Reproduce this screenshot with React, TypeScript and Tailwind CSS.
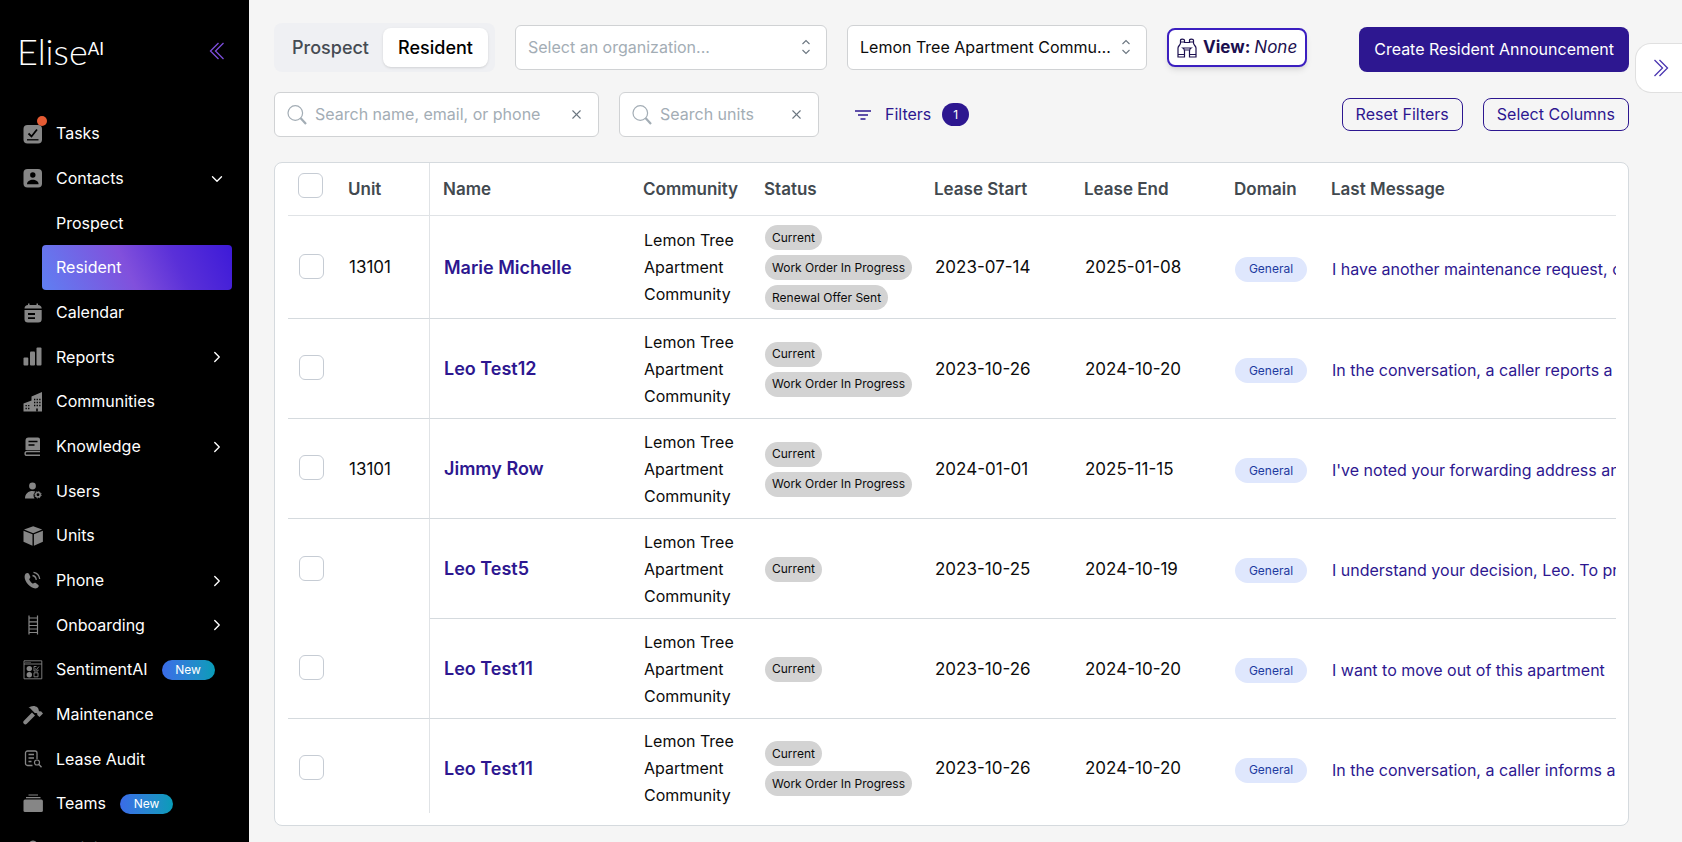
import React, { useState } from 'react';
import { ChevronDown, ChevronRight, X } from 'lucide-react';

type NavItem = {
  label: string;
  icon?: React.ReactNode;
  arrow?: 'down' | 'right';
  isNew?: boolean;
  dot?: boolean;
  sub?: boolean;
  active?: boolean;
};

const Glyph = ({ children }: { children: React.ReactNode }) => (
  <svg viewBox="0 0 20 20" className="h-5 w-5" fill="currentColor" aria-hidden="true">
    {children}
  </svg>
);

const NAV: NavItem[] = [
  {
    label: 'Tasks',
    dot: true,
    icon: (
      <Glyph>
        <rect x="0.5" y="1" width="18.5" height="18.5" rx="4" />
        <path d="M5.5 9.5l3 3 5.5-7" fill="none" stroke="#000" strokeWidth="1.8" />
        <path d="M4 15.8h11.5" stroke="#000" strokeWidth="1.3" />
      </Glyph>
    ),
  },
  {
    label: 'Contacts',
    arrow: 'down',
    icon: (
      <Glyph>
        <rect x="0.5" y="0" width="18.5" height="18.5" rx="4" />
        <circle cx="9.8" cy="6" r="2.7" fill="#000" />
        <path d="M4 15.3c0-6 11.6-6 11.6 0z" fill="#000" />
      </Glyph>
    ),
  },
  { label: 'Prospect', sub: true },
  { label: 'Resident', sub: true, active: true },
  {
    label: 'Calendar',
    icon: (
      <Glyph>
        <path d="M1.5 5.5C1.5 3.4 3 2 5 2V.5h1.5V2h7V.5H15V2c2 0 3.7 1.4 3.7 3.5z" />
        <path d="M1.5 7h17.2v9a3.5 3.5 0 0 1-3.5 3.5H5A3.5 3.5 0 0 1 1.5 16z" />
        <path d="M5 11h7M5 15.2h7" stroke="#000" strokeWidth="1.8" />
      </Glyph>
    ),
  },
  {
    label: 'Reports',
    arrow: 'right',
    icon: (
      <Glyph>
        <rect x="0.5" y="10.5" width="4.8" height="8" rx="1" />
        <rect x="7" y="4.5" width="5" height="14" rx="1" />
        <rect x="13.5" y="0.5" width="5" height="18" rx="1" />
      </Glyph>
    ),
  },
  {
    label: 'Communities',
    icon: (
      <Glyph>
        <path d="M0.5 11.5l8-3V4.5L19 0v19.5H0.5z" />
        <path
          d="M11 7.5h7M11 10.5h7M11 13.5h7M2.5 13.7h5M2.5 16.5h5"
          stroke="#000"
          strokeWidth="1.3"
          strokeDasharray="1.3 1.3"
        />
        <path d="M13.2 16.5h1.6v3h-1.6z" fill="#000" />
      </Glyph>
    ),
  },
  {
    label: 'Knowledge',
    arrow: 'right',
    icon: (
      <Glyph>
        <path d="M5.5 0.5H15a2 2 0 0 1 2 2V13H2.5V3.5a3 3 0 0 1 3-3z" />
        <path d="M5.5 4.5h9M5.5 8h6" stroke="#000" strokeWidth="1.3" />
        <path d="M17 14.5H4a1.7 1.7 0 0 0 0 3.8h13" fill="none" stroke="currentColor" strokeWidth="1.4" />
      </Glyph>
    ),
  },
  {
    label: 'Users',
    icon: (
      <Glyph>
        <circle cx="9.5" cy="5" r="3.4" />
        <path d="M2 17.5c0-5 3.5-7.5 7.5-7.5 1.2 0 2.2.2 3 .6-2.3 1.6-2.6 4.7-1 6.9z" />
        <circle cx="15" cy="13.8" r="2.2" fill="none" stroke="currentColor" strokeWidth="1.5" />
        <circle cx="15" cy="13.8" r="3.2" fill="none" stroke="currentColor" strokeWidth="1" strokeDasharray="1.3 1.2" />
      </Glyph>
    ),
  },
  {
    label: 'Units',
    icon: (
      <Glyph>
        <path d="M10.2 0.2l9 3.3-9 3.7L1 3.5z" />
        <path d="M0.5 4.7l9 3.6v11.5l-9-4zM19.9 4.7l-9 3.6v11.5l9-4z" />
      </Glyph>
    ),
  },
  {
    label: 'Phone',
    arrow: 'right',
    icon: (
      <Glyph>
        <path d="M2.5 2.8C4 1.5 5.5 1.8 6.2 3.2l1 2.2c.4 1-.1 1.7-.9 2.6-.5.6 2.8 5 3.9 4.5 1-.5 1.7-.9 2.6-.4l2.2 1.6c1.2.9.9 2.5-.8 3.4C8.5 19.8-1.5 8.5 2.5 2.8z" />
        <path d="M9.5 4.5c2 .4 3.5 2 3.8 4.3M10.5 1.3c3.5.6 5.8 3.2 6.2 6.7" fill="none" stroke="currentColor" strokeWidth="1.3" />
      </Glyph>
    ),
  },
  {
    label: 'Onboarding',
    arrow: 'right',
    icon: (
      <Glyph>
        <path
          d="M6 .5v19M14.5 .5v19M6 3h8.5M6 6.8h8.5M6 10.5h8.5M6 14h8.5M6 17.5h8.5"
          fill="none"
          stroke="currentColor"
          strokeWidth="1.2"
        />
      </Glyph>
    ),
  },
  {
    label: 'SentimentAI',
    isNew: true,
    icon: (
      <Glyph>
        <path d="M1 .8h17.8v18H1zM1 4h17.8" fill="none" stroke="currentColor" strokeWidth="0.9" />
        <path d="M2.5 2.4h5" stroke="currentColor" strokeDasharray="1 1" />
        <circle cx="6.3" cy="8.6" r="2.7" />
        <circle cx="6.3" cy="14.7" r="2.7" />
        <path d="M15 9.5v1.5h-4V6.5h2.5M12 8.5l1.3 1.2L16 6.5M11 12.8h4v4h-4z" fill="none" stroke="currentColor" strokeWidth="0.9" />
      </Glyph>
    ),
  },
  {
    label: 'Maintenance',
    icon: (
      <Glyph>
        <path d="M9 7.5l3 3-8.2 8.2a2 2 0 0 1-2.9-2.9z" />
        <path d="M5.5 3C8 .5 12 .2 14.5 2.5c1 1 1.3 2.3 1.3 3.3l1 .8 1.2-.3 2 2.2-3.5 3.5-2.2-2v-1.2l-.8-.8h-1.7L8.500 4.700C8 3.500 7 3 5.500 3z" />
      </Glyph>
    ),
  },
  {
    label: 'Lease Audit',
    icon: (
      <Glyph>
        <path
          d="M9.5 16.5H4.5a2 2 0 0 1-2-2V4a2 2 0 0 1 2-2H12a2 2 0 0 1 2 2v6M5.5 5.5H11M5.5 9H11M5.5 12.5h3"
          fill="none"
          stroke="currentColor"
          strokeWidth="1.3"
        />
        <circle cx="14" cy="13.5" r="2.5" fill="none" stroke="currentColor" strokeWidth="1.2" />
        <path d="M16 15.5l2.5 2.7" stroke="currentColor" strokeWidth="1.3" />
      </Glyph>
    ),
  },
  {
    label: 'Teams',
    isNew: true,
    icon: (
      <Glyph>
        <path d="M5.5 1h9.5M3 3.7h14.5" stroke="currentColor" strokeWidth="1.2" />
        <rect x="0.5" y="5.5" width="19.4" height="12.5" rx="1.5" />
      </Glyph>
    ),
  },
  {
    label: 'Training',
    icon: (
      <Glyph>
        <circle cx="10" cy="5.5" r="4" />
        <path d="M2 20c0-10 16-10 16 0z" />
      </Glyph>
    ),
  },
];

type Row = {
  unit?: string;
  name: string;
  status: string[];
  start: string;
  end: string;
  message: string;
  joined?: boolean; // shares its unit cell with the next row
};

const ROWS: Row[] = [
  {
    unit: '13101',
    name: 'Marie Michelle',
    status: ['Current', 'Work Order In Progress', 'Renewal Offer Sent'],
    start: '2023-07-14',
    end: '2025-01-08',
    message: 'I have another maintenance request, can you help?',
  },
  {
    name: 'Leo Test12',
    status: ['Current', 'Work Order In Progress'],
    start: '2023-10-26',
    end: '2024-10-20',
    message: 'In the conversation, a caller reports a maintenance issue',
  },
  {
    unit: '13101',
    name: 'Jimmy Row',
    status: ['Current', 'Work Order In Progress'],
    start: '2024-01-01',
    end: '2025-11-15',
    message: "I've noted your forwarding address and will update it",
  },
  {
    name: 'Leo Test5',
    status: ['Current'],
    start: '2023-10-25',
    end: '2024-10-19',
    message: 'I understand your decision, Leo. To proceed with this',
    joined: true,
  },
  {
    name: 'Leo Test11',
    status: ['Current'],
    start: '2023-10-26',
    end: '2024-10-20',
    message: 'I want to move out of this apartment',
  },
  {
    name: 'Leo Test11',
    status: ['Current', 'Work Order In Progress'],
    start: '2023-10-26',
    end: '2024-10-20',
    message: 'In the conversation, a caller informs a',
  },
];

const COLUMNS = ['Community', 'Status', 'Lease Start', 'Lease End', 'Domain', 'Last Message'];

function DoubleChevron({ dir }: { dir: 'left' | 'right' }) {
  return (
    <svg viewBox="0 0 16 18" className="h-[18px] w-4" fill="none" stroke="currentColor" strokeWidth="1.3" aria-hidden="true">
      {dir === 'left' ? <path d="M9.5 1l-8 8 8 8M14.5 1l-8 8 8 8" /> : <path d="M1.5 1l8 8-8 8M6.5 1l8 8-8 8" />}
    </svg>
  );
}

function Sidebar() {
  return (
    <aside className="flex h-screen w-[249px] shrink-0 flex-col overflow-hidden bg-black text-white">
      <div className="flex h-[111px] shrink-0 items-start justify-between pt-[29px] pr-6 pl-[17px]">
        <div className="flex items-start font-[Lato,sans-serif] font-light">
          <span className="text-[36px] leading-[44px]">Elise</span>
          <span className="text-[17px] leading-10 font-normal">AI</span>
        </div>
        <button aria-label="Collapse menu" className="mt-[13px] text-[#7c4ddb]">
          <DoubleChevron dir="left" />
        </button>
      </div>
      <nav>
        <ul>
          {NAV.map((item) => (
            <li key={item.label} className="h-[45px] nth-[3n]:h-11">
              {item.sub ? (
                <a
                  href="#"
                  className={
                    item.active
                      ? 'mr-[17px] ml-[42px] flex h-full items-center rounded-sm bg-[linear-gradient(65deg,#5f7ff2_0%,#8150dc_45%,#5a30d8_70%,#3d1ad8_100%)] pl-[14px]'
                      : 'mr-[17px] ml-[42px] flex h-full items-center pl-[14px]'
                  }
                >
                  {item.label}
                </a>
              ) : (
                <a href="#" className="flex h-full items-center pr-[23px] pl-[23px]">
                  <span className="relative mr-[13px] text-[#868686]">
                    {item.icon}
                    {item.dot && <span className="absolute -top-2 left-[14px] h-[10px] w-[10px] rounded-full bg-[#e55b33]" />}
                  </span>
                  {item.label}
                  {item.isNew && (
                    <span className="ml-[14px] flex h-5 w-[53px] items-center justify-center rounded-full bg-linear-to-r from-[#3a6be8] to-[#079cb8] text-xs">
                      New
                    </span>
                  )}
                  {item.arrow === 'down' && <ChevronDown size={18} strokeWidth={1.8} className="ml-auto" />}
                  {item.arrow === 'right' && <ChevronRight size={18} strokeWidth={1.8} className="ml-auto" />}
                </a>
              )}
            </li>
          ))}
        </ul>
      </nav>
    </aside>
  );
}

function UpDown() {
  return (
    <svg viewBox="0 0 10 16" className="pointer-events-none absolute top-[14px] right-4 h-4 w-2.5" fill="none" stroke="#6b7680" strokeWidth="1.1" aria-hidden="true">
      <path d="M1.500 5L5 1.500 8.500 5M1.500 11L5 14.500 8.500 11" />
    </svg>
  );
}

function SearchBox({ label, className }: { label: string; className: string }) {
  const [value, setValue] = useState('');
  return (
    <div className={`flex h-[45px] items-center rounded-md border border-[#d0d2d4] bg-white pr-[14px] pl-3 ${className}`}>
      <svg viewBox="0 0 20 20" className="mr-2 h-5 w-5 shrink-0" fill="none" stroke="#a3adb5" aria-hidden="true">
        <circle cx="8.3" cy="8" r="7.3" strokeWidth="1.2" />
        <path d="M13.5 13l5.5 6" strokeWidth="2.2" />
      </svg>
      <input
        aria-label={label}
        placeholder={label}
        value={value}
        onChange={(e) => setValue(e.target.value)}
        className="min-w-0 flex-1 outline-none placeholder:text-[#a3adb5]"
      />
      <button aria-label={`Clear ${label}`} onClick={() => setValue('')} className="text-[#6b7680]">
        <X size={15} strokeWidth={1.7} />
      </button>
    </div>
  );
}

function Check({ label }: { label: string }) {
  return (
    <input
      type="checkbox"
      aria-label={label}
      className="block h-[25px] w-[25px] appearance-none rounded-md border border-[#c6ccd4] bg-white checked:bg-[#2d1790]"
    />
  );
}

function Toolbar() {
  const [tab, setTab] = useState('Resident');
  return (
    <>
      <div className="flex items-center gap-5">
        <div className="flex h-[49px] shrink-0 items-center rounded-lg bg-[#eff0f3] pr-[7px] pl-1 font-medium">
          {['Prospect', 'Resident'].map((t) => (
            <button
              key={t}
              onClick={() => setTab(t)}
              className={
                tab === t
                  ? 'h-[39px] w-[105px] rounded-lg bg-white text-lg text-black shadow-sm'
                  : 'h-[39px] w-[105px] rounded-lg text-lg text-[#454b52]'
              }
            >
              {t}
            </button>
          ))}
        </div>
        <div className="relative w-[312px]">
          <select
            aria-label="Organization"
            className="h-[45px] w-full appearance-none rounded-md border border-[#d0d2d4] bg-white pr-7 pl-3 text-[#a3adb5]"
          >
            <option>Select an organization...</option>
          </select>
          <UpDown />
        </div>
        <div className="relative w-[300px]">
          <select
            aria-label="Community"
            className="h-[45px] w-full appearance-none rounded-md border border-[#d0d2d4] bg-white pr-7 pl-3 text-ellipsis"
          >
            <option>Lemon Tree Apartment Community</option>
          </select>
          <UpDown />
        </div>
        <button className="flex h-[39px] shrink-0 items-center rounded-lg border-2 border-[#3b1fc0] bg-white px-2 text-[17px] text-[#1c0f4f] shadow-md">
          <svg viewBox="0 0 20 20" className="mr-1.5 h-5 w-5" fill="none" stroke="currentColor" strokeWidth="1.2" aria-hidden="true">
            <path d="M1 16V10c0-2 2.5-3 2.5-5V2.2C3.5.7 7.5.7 7.5 2.2V4.5h5V2.2c0-1.5 4-1.5 4 0V5c0 2 2.5 3 2.5 5v6M3.5 4h4M12.5 4h4M1 16.5h6.5M12.5 16.5H19M1 16v3h6.5v-6c0-2-1.5-3-1.5-3h8s-1.5 1-1.5 3v6H19v-3M8 12h4" />
          </svg>
          <b className="mr-1 font-bold">View:</b>
          <i>None</i>
        </button>
        <button className="ml-auto h-[45px] shrink-0 self-end rounded-lg bg-[#2d1790] px-[15px] text-white">
          Create Resident Announcement
        </button>
      </div>

      <div className="mt-5 flex items-center gap-5">
        <SearchBox label="Search name, email, or phone" className="w-[325px]" />
        <SearchBox label="Search units" className="w-[200px]" />
        <button className="ml-4 flex items-center text-[#2d1790]">
          <svg viewBox="0 0 16 10" className="mr-[14px] h-2.5 w-4" stroke="currentColor" strokeWidth="1.3" aria-hidden="true">
            <path d="M0 1h16M3 5h10M5.5 9h5" />
          </svg>
          Filters
          <span className="ml-[11px] flex h-[23px] w-[27px] items-center justify-center rounded-full bg-[#2d1790] text-xs text-white">1</span>
        </button>
        <button className="ml-auto h-[33px] rounded-lg border border-[#2d1790] px-[13px] text-[#2d1790]">Reset Filters</button>
        <button className="h-[33px] rounded-lg border border-[#2d1790] px-[13px] text-[#2d1790]">Select Columns</button>
      </div>
    </>
  );
}

function ResidentRow({ row, last }: { row: Row; last: boolean }) {
  const line = last ? '' : 'border-b border-[#d5dade]';
  const groupLine = last || row.joined ? '' : 'border-b border-[#d5dade]';
  const pad = last ? 'pt-[9px] pb-1' : 'h-[100px] pt-[9px] pb-2';
  return (
    <tr>
      <td className={`${pad} ${groupLine} pl-[11px]`}>
        <div className="pb-[3px]">
          <Check label={`Select ${row.name}`} />
        </div>
      </td>
      <td className={`${pad} ${groupLine} border-r border-r-[#e0e3e6] pl-[14px] text-[17px]`}>{row.unit}</td>
      <td className={`${pad} ${line} pl-[14px]`}>
        <a href="#" className="text-lg font-semibold text-[#2d1790]">
          {row.name}
        </a>
      </td>
      <td className={`${pad} ${line} pl-[14px]`}>Lemon Tree Apartment Community</td>
      <td className={`${pad} ${line} pl-[14px]`}>
        <div className="flex flex-col items-start gap-[5px]">
          {row.status.map((s) => (
            <span key={s} className="flex h-[25px] items-center rounded-full bg-[#d3d3d3] px-[7px] text-xs whitespace-nowrap">
              {s}
            </span>
          ))}
        </div>
      </td>
      <td className={`${pad} ${line} pl-[14px] text-[17px]`}>{row.start}</td>
      <td className={`${pad} ${line} pl-[14px] text-[17px]`}>{row.end}</td>
      <td className={`${pad} ${line} pl-[14px]`}>
        <span className="mt-[3px] flex h-[25px] w-[72px] items-center justify-center rounded-full bg-[#dfe7fd] text-xs text-[#1e3a9f]">
          General
        </span>
      </td>
      <td className={`${pad} ${line} overflow-hidden pl-[14px] whitespace-nowrap`}>
        <a href="#" className="block pt-[3px] text-[#2d1790]">
          {row.message}
        </a>
      </td>
    </tr>
  );
}

export default function App() {
  return (
    <div className="flex h-screen overflow-hidden bg-[#f5f5f5] font-[Inter,sans-serif] text-base leading-[27px] text-[#0c0c0c]">
      <Sidebar />
      <main className="relative min-w-0 flex-1 pt-[23px] pr-[53px] pl-[25px]">
        <Toolbar />

        <div className="mt-[25px] rounded-lg border border-[#d5dade] bg-white pr-3 pb-3 pl-[13px]">
          <table className="w-full table-fixed border-separate border-spacing-0 text-left">
            <colgroup>
              <col className="w-[47px]" />
              <col className="w-[95px]" />
              <col className="w-[200px]" />
              <col className="w-[121px]" />
              <col className="w-[170px]" />
              <col className="w-[150px]" />
              <col className="w-[150px]" />
              <col className="w-[97px]" />
              <col />
            </colgroup>
            <thead>
              <tr className="text-[17px] text-[#42494f]">
                <th className="h-[53px] border-b border-[#e0e3e6] pt-[10px] pl-[10px] align-top">
                  <Check label="Select all" />
                </th>
                <th className="border-r border-b border-[#e0e3e6] pl-[13px] font-semibold">Unit</th>
                <th className="border-b border-[#e0e3e6] pl-[13px] font-semibold">Name</th>
                {COLUMNS.map((c) => (
                  <th key={c} className="border-b border-[#e0e3e6] pl-[13px] font-semibold whitespace-nowrap">
                    {c}
                  </th>
                ))}
              </tr>
            </thead>
            <tbody>
              {ROWS.map((row, i) => (
                <ResidentRow key={i} row={row} last={i === ROWS.length - 1} />
              ))}
            </tbody>
          </table>
        </div>

        {/* drawer handle on the window edge */}
        <button
          aria-label="Open panel"
          className="absolute top-[43px] right-0 flex h-[50px] w-[47px] items-center justify-center rounded-l-2xl border border-r-0 border-[#e0e0e0] bg-white pl-1 text-[#4a35b0]"
        >
          <DoubleChevron dir="right" />
        </button>
      </main>
    </div>
  );
}
